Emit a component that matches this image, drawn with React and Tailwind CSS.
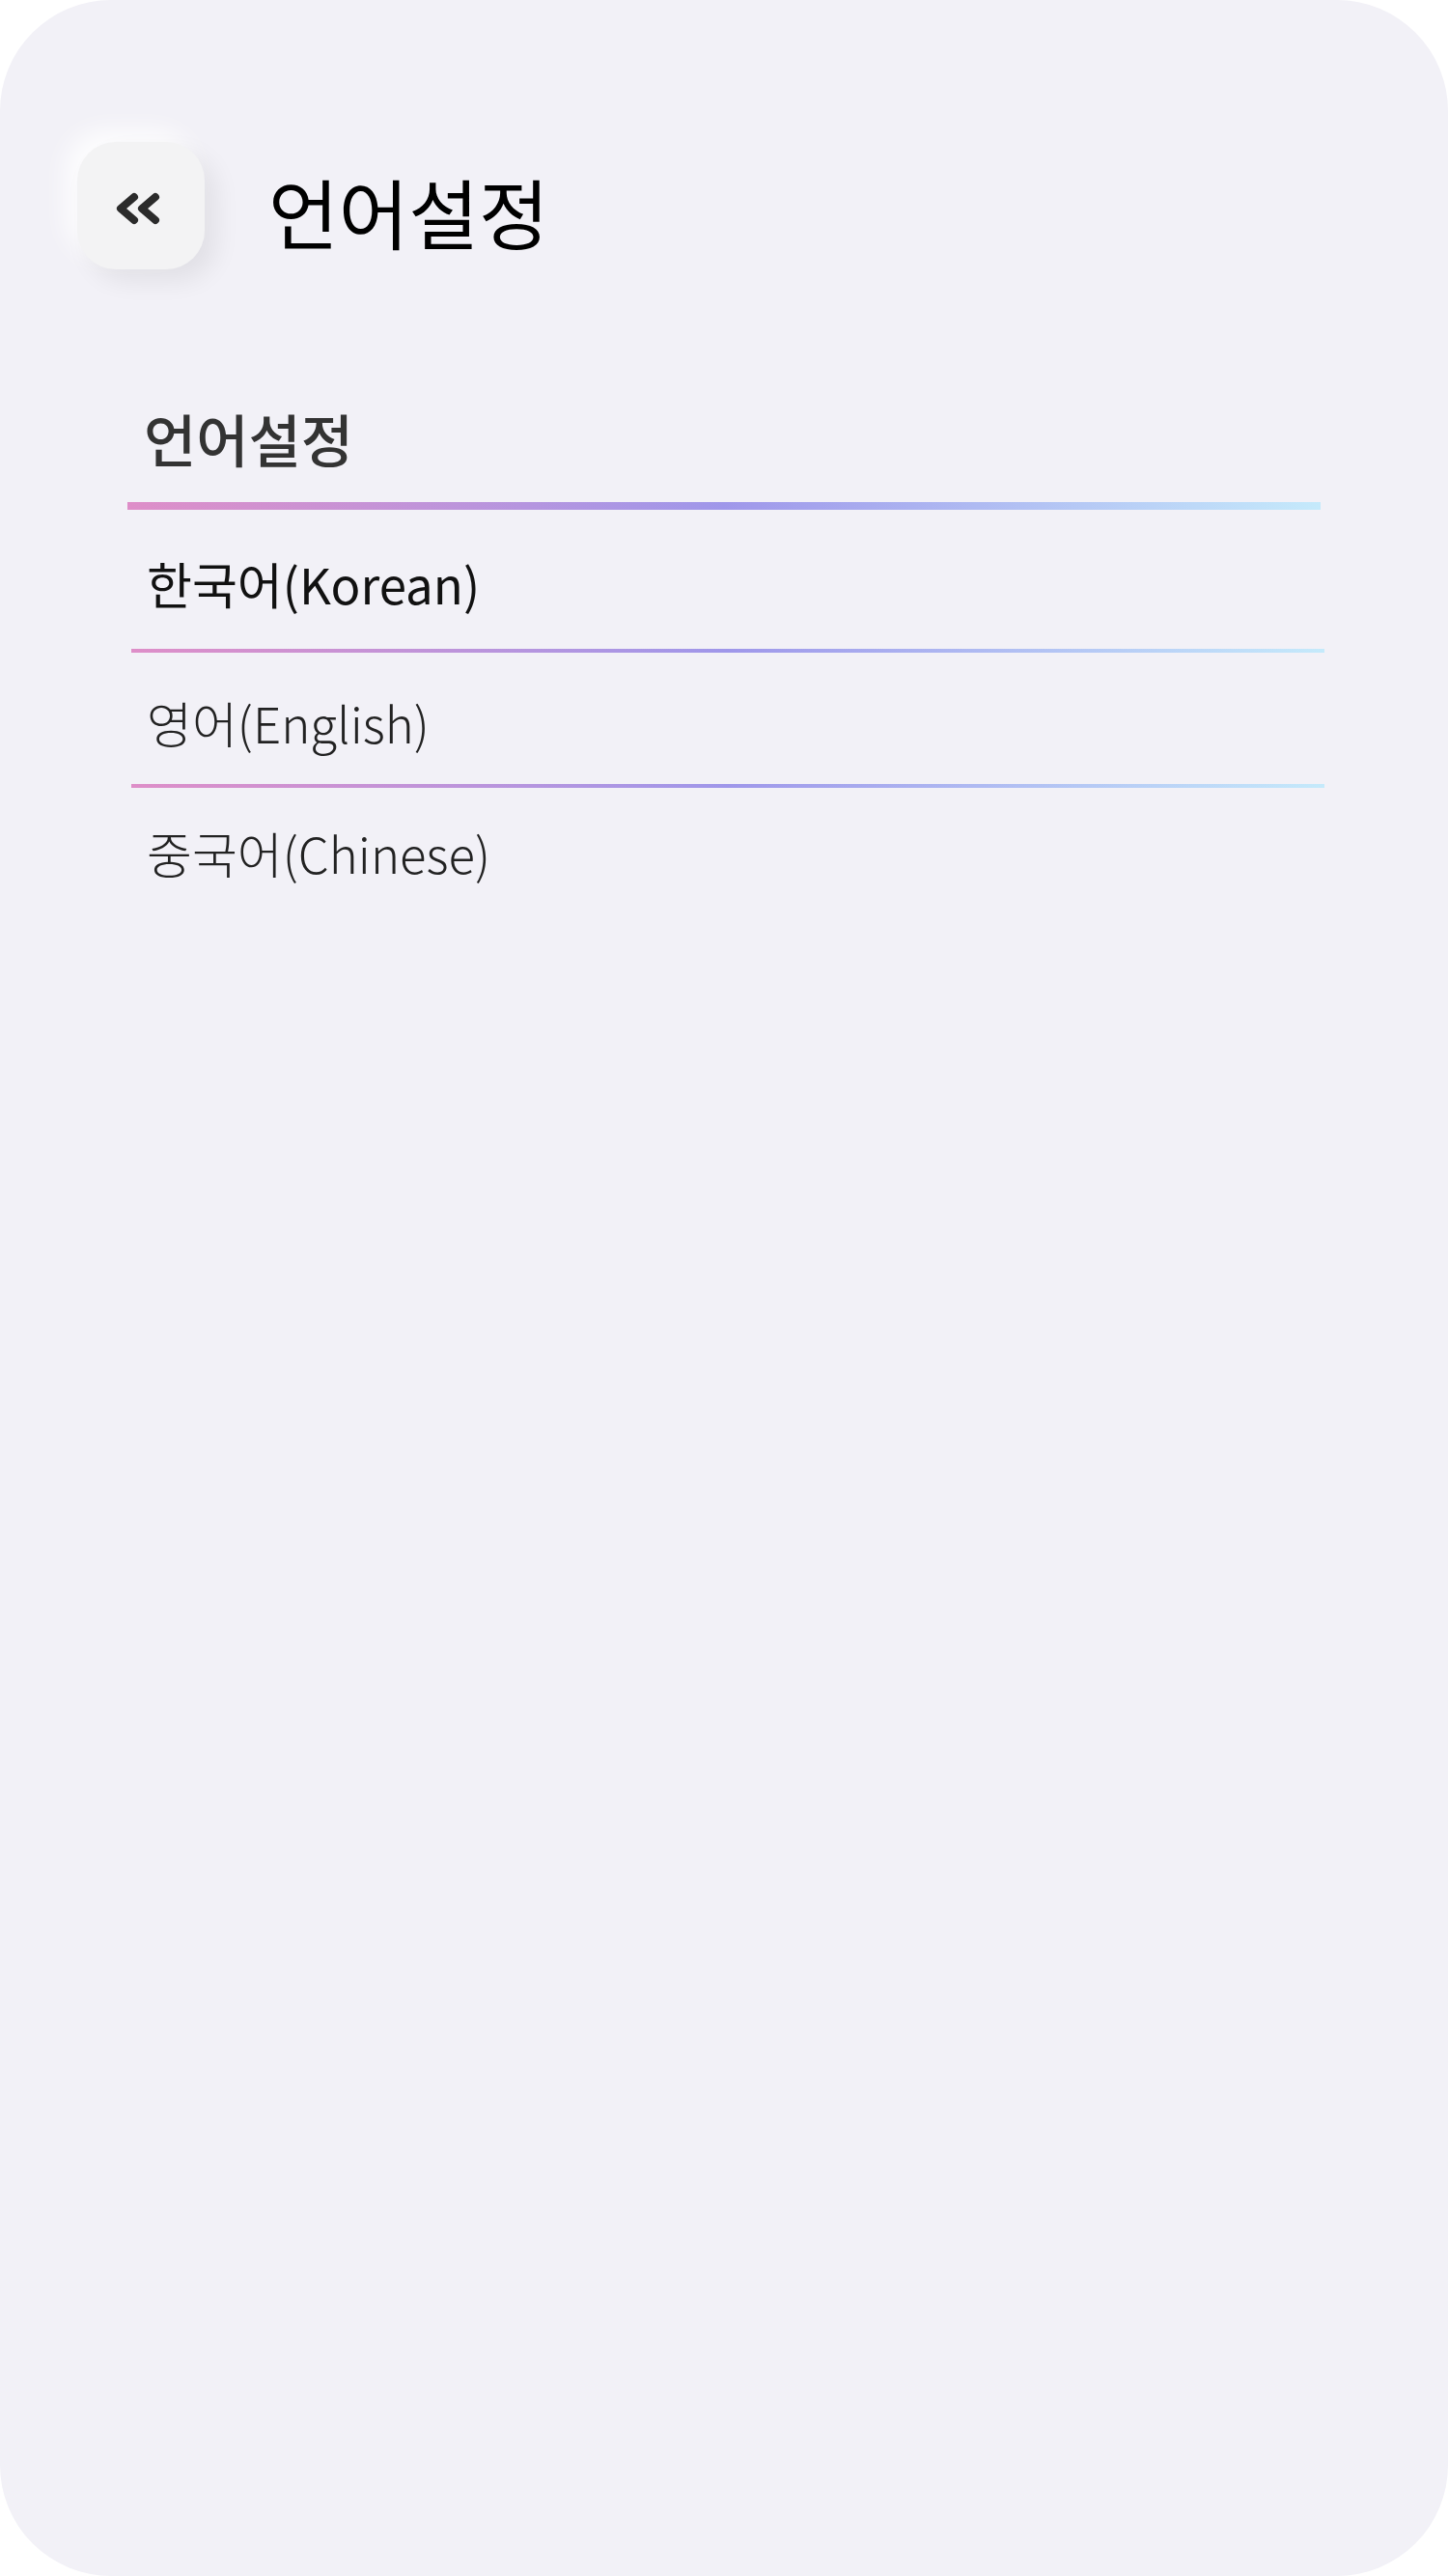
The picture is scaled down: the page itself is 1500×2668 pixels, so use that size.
import React from 'react';

const languages = [
  { id: 'ko', label: '한국어(Korean)', active: true, rowClass: 'h-[144px] pt-[8px]' },
  { id: 'en', label: '영어(English)', active: false, rowClass: 'h-[136px] pt-[8px]' },
  { id: 'zh', label: '중국어(Chinese)', active: false, rowClass: 'h-[136px] pb-[2px]' },
];

function BackIcon() {
  return (
    <svg width="48" height="32" viewBox="0 0 48 32" fill="none" className="overflow-visible mt-[6px] mr-[4px]">
      <path d="M19 4 L5 16 L19 28" stroke="#2b2b2b" strokeWidth="8" strokeLinecap="round" strokeLinejoin="round" />
      <path d="M41 4 L27 16 L41 28" stroke="#2b2b2b" strokeWidth="8" strokeLinecap="round" strokeLinejoin="round" />
    </svg>
  );
}

export default function App() {
  return (
    <div className="w-full h-[2668px] bg-white" style={{ fontFamily: '"Noto Sans CJK KR", "Noto Sans", sans-serif' }}>
      <div className="h-full bg-[#f2f1f7] rounded-[115px] overflow-hidden">
        {/* 상단 헤더 */}
        <div className="flex items-center pt-[147px] pl-[80px]">
          <button
            type="button"
            className="w-[132px] h-[132px] rounded-[40px] bg-[#f3f3f4] flex items-center justify-center shadow-[12px_12px_26px_rgba(0,0,0,0.07),-12px_-12px_26px_rgba(255,255,255,0.85)]"
          >
            <BackIcon />
          </button>
          <h1 className="ml-[66px] mt-[10px] text-[79px] leading-none font-normal text-black">언어설정</h1>
        </div>

        {/* 언어 목록 */}
        <div className="ml-[132px] w-[1240px] mt-[145px]">
          <h2 className="pl-[17px] text-[59px] leading-none font-medium text-[#333333]">언어설정</h2>
          <div className="mt-[37px] h-2 w-[1236px] bg-gradient-to-r from-[#de8ec8] via-[#9f97ea] to-[#c5eafb]" />

          {languages.map((lang, index) => (
            <div key={lang.id}>
              <div className={`flex items-center pl-[20px] ${lang.rowClass}`}>
                <span
                  className={
                    lang.active
                      ? 'text-[51px] leading-none font-normal text-[#111111]'
                      : 'text-[51px] leading-none font-light text-[#222222]'
                  }
                >
                  {lang.label}
                </span>
              </div>
              {index < languages.length - 1 && (
                <div className="ml-1 h-1 w-[1236px] bg-gradient-to-r from-[#de8ec8] via-[#9f97ea] to-[#c5eafb]" />
              )}
            </div>
          ))}
        </div>
      </div>
    </div>
  );
}
